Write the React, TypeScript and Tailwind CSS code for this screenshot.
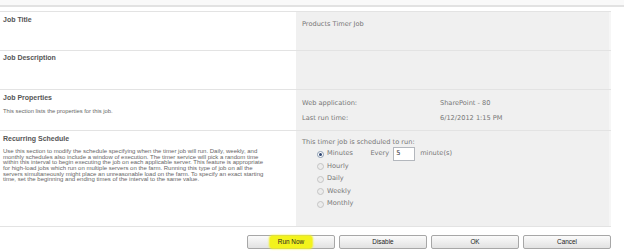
import React from "react";

const L = { fontFamily: '"Liberation Sans", Arial, sans-serif' };
const R = { fontFamily: '"DejaVu Sans", Verdana, sans-serif' };

function Radio({ label, checked }: { label: string; checked?: boolean }) {
  return (
    <div className="flex items-center h-[12.5px]">
      <span
        className={
          "w-[7px] h-[7px] rounded-full border flex items-center justify-center " +
          (checked ? "border-[#8a9bb0] bg-white" : "border-[#c4c4c4] bg-[#ececec]")
        }
      >
        {checked && <span className="w-[3px] h-[3px] rounded-full bg-[#2d4470]" />}
      </span>
      <span className="ml-[3px] text-[6.6px] text-[#777]" style={R}>
        {label}
      </span>
    </div>
  );
}

function Btn({ children, hl }: { children: React.ReactNode; hl?: boolean }) {
  return (
    <div className="w-[88px] h-[14px] rounded-[2px] border border-[#a7a7a7] bg-gradient-to-b from-[#fbfbfb] to-[#e2e2e2] flex items-center justify-center">
      <span
        className={
          "text-[6.4px] text-[#222] leading-none " +
          (hl ? "bg-[#f3f31c] px-[8px] py-[3px] rounded-[3px] shadow-[0_0_2px_1px_#f3f31c]" : "")
        }
        style={L}
      >
        {children}
      </span>
    </div>
  );
}

const desc = [
  "Use this section to modify the schedule specifying when the timer job will run. Daily, weekly, and",
  "monthly schedules also include a window of execution. The timer service will pick a random time",
  "within this interval to begin executing the job on each applicable server. This feature is appropriate",
  "for high-load jobs which run on multiple servers on the farm. Running this type of job on all the",
  "servers simultaneously might place an unreasonable load on the farm. To specify an exact starting",
  "time, set the beginning and ending times of the interval to the same value.",
];

export default function App() {
  return (
    <div className="w-[624px] h-[251px] bg-white overflow-hidden relative">
      <div className="h-[5px] bg-[#f9f9f9]" />
      <div className="h-[2px] bg-[#e2e2e2]" />
      <div className="h-[4px] bg-white" />
      <div className="w-[611px]">
        {/* Job Title */}
        <div className="flex h-[39px] border-t border-[#e3e3e3]">
          <div className="w-[296px] pl-[3px] pt-[3px]">
            <div className="text-[7px] font-bold text-[#555] leading-[9px]" style={L}>
              Job Title
            </div>
          </div>
          <div className="flex-1 bg-[#f0f0f0] pl-[6px] pt-[8px] border-r-[2px] border-[#f6f6f6]">
            <div className="text-[6.6px] text-[#777] leading-[9px]" style={R}>
              Products Timer Job
            </div>
          </div>
        </div>
        {/* Job Description */}
        <div className="flex h-[39px] border-t border-[#e3e3e3]">
          <div className="w-[296px] pl-[3px] pt-[2px]">
            <div className="text-[7px] font-bold text-[#555] leading-[9px]" style={L}>
              Job Description
            </div>
          </div>
          <div className="flex-1 bg-[#f0f0f0] border-r-[2px] border-[#f6f6f6]" />
        </div>
        {/* Job Properties */}
        <div className="flex h-[41px] border-t border-[#e3e3e3]">
          <div className="w-[296px] pl-[3px] pt-[3px]">
            <div className="text-[7px] font-bold text-[#555] leading-[9px]" style={L}>
              Job Properties
            </div>
            <div className="mt-[6px] text-[5.8px] text-[#666] leading-[6px]" style={L}>
              This section lists the properties for this job.
            </div>
          </div>
          <div className="flex-1 bg-[#f0f0f0] pl-[6px] pt-[9px] border-r-[2px] border-[#f6f6f6] text-[6.6px] text-[#777] leading-[9px]" style={R}>
            <div className="flex">
              <span className="w-[138px]">Web application:</span>
              <span>SharePoint - 80</span>
            </div>
            <div className="flex mt-[6px]">
              <span className="w-[138px]">Last run time:</span>
              <span>6/12/2012 1:15 PM</span>
            </div>
          </div>
        </div>
        {/* Recurring Schedule */}
        <div className="flex h-[96px] border-t border-[#e3e3e3]">
          <div className="w-[296px] pl-[3px] pt-[3px] pr-[4px]">
            <div className="text-[7px] font-bold text-[#555] leading-[9px]" style={L}>
              Recurring Schedule
            </div>
            <div className="mt-[6px] text-[6px] text-[#666] leading-[5.67px]" style={L}>
              {desc.map((d) => (
                <div key={d} className="whitespace-nowrap">
                  {d}
                </div>
              ))}
            </div>
          </div>
          <div className="flex-1 bg-[#f0f0f0] pl-[6px] pt-[7px] border-r-[2px] border-[#f6f6f6]">
            <div className="text-[6.6px] text-[#777] leading-[9px]" style={R}>
              This timer job is scheduled to run:
            </div>
            <div className="flex pl-[15px] mt-[1px]">
              <div className="flex flex-col">
                <Radio label="Minutes" checked />
                <Radio label="Hourly" />
                <Radio label="Daily" />
                <Radio label="Weekly" />
                <Radio label="Monthly" />
              </div>
              <div className="flex items-center h-[14px] ml-[17px] mt-[-1px] text-[6.6px] text-[#777]" style={R}>
                <span>Every</span>
                <span className="ml-[4px] w-[22px] h-[14px] border border-[#b3b7bd] bg-white flex items-center pl-[2px] text-[#333]">
                  5
                </span>
                <span className="ml-[5px]">minute(s)</span>
              </div>
            </div>
          </div>
        </div>
        <div className="border-t border-[#e3e3e3]" />
        <div className="flex justify-end gap-[4px] pt-[8px]">
          <Btn hl>Run Now</Btn>
          <Btn>Disable</Btn>
          <Btn>OK</Btn>
          <Btn>Cancel</Btn>
        </div>
      </div>
    </div>
  );
}
